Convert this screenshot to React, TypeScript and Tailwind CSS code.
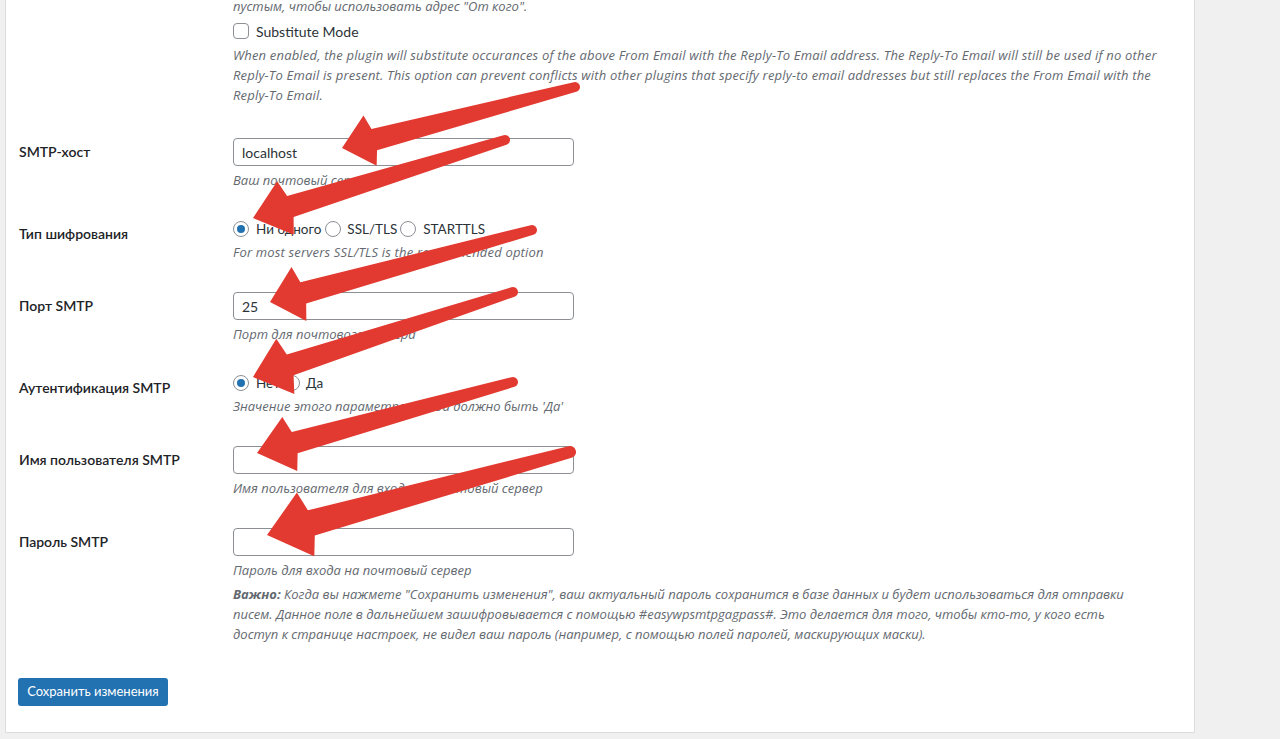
import React from 'react'

const font = { fontFamily: 'Lato, "Noto Sans", sans-serif' }
const descFont = { fontFamily: '"Open Sans", "Noto Sans", sans-serif' }

type Arrow = { tip: [number, number]; tail: [number, number]; head: number; hw: number; s: number; t: number }

const arrows: Arrow[] = [
  { tip: [342, 148], tail: [575, 87], head: 29, hw: 26, s: 11, t: 5 },
  { tip: [253, 218], tail: [505, 140], head: 34, hw: 28, s: 11, t: 5 },
  { tip: [270, 302], tail: [532, 230], head: 30, hw: 28, s: 11, t: 5 },
  { tip: [253, 377], tail: [513, 292], head: 34, hw: 29, s: 11, t: 5 },
  { tip: [257, 453], tail: [513, 382], head: 34, hw: 28, s: 11, t: 5 },
  { tip: [267, 535], tail: [570, 452], head: 40, hw: 33, s: 13, t: 6 },
]

const ArrowShape = ({ a }: { a: Arrow }) => {
  const dx = a.tail[0] - a.tip[0]
  const dy = a.tail[1] - a.tip[1]
  const len = Math.sqrt(dx * dx + dy * dy)
  const ang = (Math.atan2(dy, dx) * 180) / Math.PI
  const j = a.head * 1.15
  const d = `M0 0 L${a.head} ${-a.hw} L${j} ${-a.s} L${len} ${-a.t} A${a.t} ${a.t} 0 0 1 ${len} ${a.t} L${j} ${a.s} L${a.head} ${a.hw} Z`
  return <path d={d} fill="#e23a30" transform={`translate(${a.tip[0]} ${a.tip[1]}) rotate(${ang})`} />
}

const Radio = ({ checked }: { checked?: boolean }) => (
  <span className="flex h-4 w-4 shrink-0 items-center justify-center rounded-full border border-[#8c8f94] bg-white">
    {checked && <span className="h-2 w-2 rounded-full bg-[#2271b1]" />}
  </span>
)

const Desc = ({ children, latin }: { children: React.ReactNode; latin?: boolean }) => (
  <p className={`mt-1 text-[13px] italic leading-5 text-[#646970] ${latin ? 'tracking-[0.18px]' : ''}`} style={descFont}>
    {children}
  </p>
)

const Input = ({ value }: { value?: string }) => (
  <div className="flex h-[28px] w-[341px] items-center rounded-[4px] border border-[#8c8f94] bg-white px-2 text-[14px] text-[#2c3338]">
    {value}
  </div>
)

const Row = ({ label, children }: { label: string; children: React.ReactNode }) => (
  <div className="flex">
    <div className="w-[214px] shrink-0 pt-5 text-[14px] font-semibold leading-[18px] text-[#1d2327]">{label}</div>
    <div className="flex-1 py-[15px]">{children}</div>
  </div>
)

export default function App() {
  return (
    <div className="h-[739px] overflow-hidden bg-[#f0f0f1]" style={font}>
      <div className="relative ml-[5px] w-[1190px] border-x border-b border-[#dcdcde] bg-white">
        <div className="-mt-[4px] pl-[13px] pb-[26px]">
          {/* previous row, scrolled out of view */}
          <div className="flex pb-[18px]">
            <div className="w-[214px] shrink-0" />
            <div className="flex-1">
              <p className="text-[13px] italic leading-5 text-[#646970]" style={descFont}>
                пустым, чтобы использовать адрес "От кого".
              </p>
              <div className="mt-[5px] flex h-5 items-center">
                <span className="h-4 w-4 rounded-[4px] border border-[#8c8f94] bg-white" />
                <span className="ml-[7px] text-[14px] text-[#2c3338]">Substitute Mode</span>
              </div>
              <Desc latin>
                When enabled, the plugin will substitute occurances of the above From Email with the Reply-To Email address. The Reply-To Email will still be used if no other
                <br />
                Reply-To Email is present. This option can prevent conflicts with other plugins that specify reply-to email addresses but still replaces the From Email with the
                <br />
                Reply-To Email.
              </Desc>
            </div>
          </div>

          <Row label="SMTP-хост">
            <Input value="localhost" />
            <Desc>Ваш почтовый сервер</Desc>
          </Row>

          <Row label="Тип шифрования">
            <div className="flex h-[18px] items-center text-[13.5px] text-[#2c3338]">
              <Radio checked />
              <span className="ml-[7px]">Ни одного</span>
              <span className="ml-1"><Radio /></span>
              <span className="ml-[6px]">SSL/TLS</span>
              <span className="ml-[3px]"><Radio /></span>
              <span className="ml-[7px]">STARTTLS</span>
            </div>
            <Desc latin>For most servers SSL/TLS is the recommended option</Desc>
          </Row>

          <Row label="Порт SMTP">
            <Input value="25" />
            <Desc>Порт для почтового сервера</Desc>
          </Row>

          <Row label="Аутентификация SMTP">
            <div className="flex h-[18px] items-center text-[13.5px] text-[#2c3338]">
              <Radio checked />
              <span className="ml-[7px]">Нет</span>
              <span className="ml-1"><Radio /></span>
              <span className="ml-[6px]">Да</span>
            </div>
            <Desc>Значение этого параметра всегда должно быть 'Да'</Desc>
          </Row>

          <Row label="Имя пользователя SMTP">
            <Input />
            <Desc>Имя пользователя для входа на почтовый сервер</Desc>
          </Row>

          <Row label="Пароль SMTP">
            <Input />
            <Desc>Пароль для входа на почтовый сервер</Desc>
            <Desc>
              <b className="font-bold">Важно:</b> Когда вы нажмете "Сохранить изменения", ваш актуальный пароль сохранится в базе данных и будет использоваться для отправки
              <br />
              писем. Данное поле в дальнейшем зашифровывается с помощью #easywpsmtpgagpass#. Это делается для того, чтобы кто-то, у кого есть
              <br />
              доступ к странице настроек, не видел ваш пароль (например, с помощью полей паролей, маскирующих маски).
            </Desc>
          </Row>

          <button className="-ml-px mt-[19px] flex h-[28px] w-[150px] items-center justify-center rounded-[3px] bg-[#2271b1] text-[13px] text-white">
            Сохранить изменения
          </button>
        </div>
      </div>

      <svg className="pointer-events-none absolute left-0 top-0" width="1280" height="739">
        {arrows.map((a, i) => (
          <ArrowShape key={i} a={a} />
        ))}
      </svg>
    </div>
  )
}
